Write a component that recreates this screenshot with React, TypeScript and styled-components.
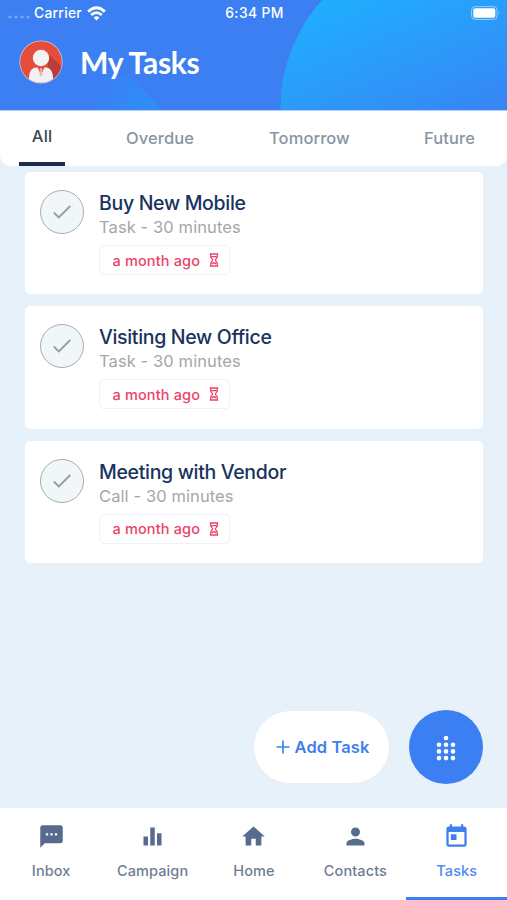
import React from 'react';
import styled, { createGlobalStyle } from 'styled-components';
import { MdTextsms, MdEqualizer, MdHome, MdPerson, MdToday } from 'react-icons/md';

const GlobalStyle = createGlobalStyle`
  * { box-sizing: border-box; }
  body { margin: 0; }
`;

const Screen = styled.div`
  width: 507px;
  height: 900px;
  display: flex;
  flex-direction: column;
  overflow: hidden;
  background: #e6f1fa;
  font-family: Inter, 'Liberation Sans', sans-serif;
`;

const Header = styled.header`
  position: relative;
  flex: none;
  height: 111px;
  background: #3c7ff2;
  border-bottom: 1px solid #b4d0fa;
  color: #fff;
`;

const Backdrop = styled.svg`
  position: absolute;
  inset: 0;
  display: block;
`;

const StatusBar = styled.div`
  position: relative;
  height: 26px;
  padding: 0 6px 0 8px;
  display: grid;
  grid-template-columns: 1fr auto 1fr;
  align-items: center;
  font-size: 13.8px;
  font-weight: 500;
  line-height: 26px;
`;

const Carrier = styled.div`
  display: flex;
  align-items: center;
  letter-spacing: 0.3px;
`;

const SignalDots = styled.svg`
  margin: 8px 4px 0 0;
`;

const Wifi = styled.svg`
  margin-left: 5px;
`;

const Clock = styled.div`
  letter-spacing: 0.4px;
`;

const Battery = styled.svg`
  justify-self: end;
`;

const TitleBar = styled.div`
  position: relative;
  display: flex;
  align-items: center;
  gap: 17px;
  padding: 13px 0 0 19px;
`;

const Title = styled.h1`
  margin: 0;
  padding-top: 1px;
  font-family: Lato, sans-serif;
  font-size: 30px;
  font-weight: 700;
  line-height: 44px;
  letter-spacing: -0.3px;
`;

const Tabs = styled.nav`
  flex: none;
  display: flex;
  height: 55px;
  padding-left: 19px;
  border-radius: 0 0 11px 11px;
  background: #fff;
`;

const Tab = styled.div<{ $active?: boolean; $width: number; $gap?: number }>`
  flex: none;
  width: ${(p) => p.$width}px;
  margin-left: ${(p) => p.$gap ?? 0}px;
  padding-top: ${(p) => (p.$active ? 15 : 17)}px;
  border-bottom: ${(p) => (p.$active ? '4px solid #1f2b4d' : 'none')};
  color: ${(p) => (p.$active ? '#3d4654' : '#8995a1')};
  font-size: 16.5px;
  font-weight: 500;
  line-height: 21px;
  letter-spacing: 0.1px;
  text-align: ${(p) => (p.$active ? 'center' : 'left')};
  white-space: nowrap;
`;

const TaskList = styled.main`
  flex: 1;
  display: flex;
  flex-direction: column;
  gap: 12px;
  padding: 6px 24px 0 25px;
`;

const Card = styled.article`
  flex: none;
  display: flex;
  gap: 15px;
  height: 122.4px;
  padding: 18px 15px;
  border-radius: 5px;
  background: #fff;
`;

const CheckCircle = styled.div`
  flex: none;
  width: 44px;
  height: 44px;
  display: flex;
  align-items: center;
  justify-content: center;
  border: 1.5px solid #a6adb3;
  border-radius: 50%;
  background: #f1f6f9;
`;

const TaskInfo = styled.div`
  padding-top: 1px;
`;

const TaskName = styled.div`
  color: #18335e;
  font-size: 19.5px;
  font-weight: 500;
  line-height: 24px;
  letter-spacing: -0.32px;
`;

const TaskMeta = styled.div`
  color: #a5a6a9;
  font-size: 16.5px;
  line-height: 24px;
  letter-spacing: 0.1px;
`;

const DueTag = styled.div`
  display: flex;
  align-items: center;
  gap: 9px;
  width: 131px;
  height: 30px;
  margin-top: 6px;
  padding-left: 12.5px;
  border: 1.5px solid #eef1f5;
  border-radius: 5px;
  color: #ed4268;
  font-size: 14.5px;
  font-weight: 500;
  letter-spacing: 0.15px;
  white-space: nowrap;
`;

const Actions = styled.div`
  flex: none;
  display: flex;
  align-items: center;
  justify-content: flex-end;
  gap: 19px;
  height: 74px;
  margin-bottom: 24px;
  padding-right: 24px;
`;

const AddButton = styled.button`
  display: flex;
  align-items: center;
  justify-content: center;
  gap: 5px;
  width: 137px;
  height: 74px;
  padding: 0 0 1px 2px;
  border: 1.5px solid #ebeef3;
  border-radius: 37px;
  background: #fff;
  color: #427fea;
  font-family: inherit;
  font-size: 16.5px;
  font-weight: 600;
  letter-spacing: 0.1px;
  white-space: nowrap;
`;

const DialButton = styled.button`
  width: 74px;
  height: 74px;
  padding: 1px 0 0;
  display: flex;
  align-items: center;
  justify-content: center;
  border: 0;
  border-radius: 50%;
  background: #3c7ff2;
`;

const BottomNav = styled.nav`
  flex: none;
  display: grid;
  grid-template-columns: repeat(5, 1fr);
  height: 92px;
  background: #fff;
`;

const NavItem = styled.div<{ $active?: boolean }>`
  display: flex;
  flex-direction: column;
  align-items: center;
  gap: 11px;
  padding: 15px 0 0 1px;
  border-bottom: 3px solid ${(p) => (p.$active ? '#3c7ff2' : 'transparent')};
  color: ${(p) => (p.$active ? '#3c7ff2' : '#566b8d')};
`;

const NavLabel = styled.span<{ $active?: boolean }>`
  color: ${(p) => (p.$active ? '#5089f3' : '#6f7d91')};
  font-size: 14.5px;
  font-weight: 500;
  line-height: 20px;
  letter-spacing: 0.1px;
`;

const Avatar = () => (
  <svg width="44" height="44" viewBox="0 0 44 44">
    <defs>
      <clipPath id="avatar-clip"><circle cx="22" cy="22" r="20.8" /></clipPath>
    </defs>
    <circle cx="22" cy="22" r="21.6" fill="#c7c6dc" />
    <g clipPath="url(#avatar-clip)">
      <rect width="44" height="44" fill="#e64c3c" />
      <path d="M27 12 44 28V44H32Z" fill="#b83d38" />
      <path d="M10 44V37Q10.500 28 17 27.500H27Q33.500 28 34 37V44Z" fill="#f1f1f1" />
      <path d="M18.500 27 22 35 25.500 27Z" fill="#e64c3c" />
      <path d="m22 27.500 1.500 2-.8 1.500.9 3.500-1.600 2-1.600-2 .9-3.500-.8-1.500Z" fill="#f3b0a8" />
      <circle cx="22" cy="18" r="8.200" fill="#f4f4f4" />
    </g>
  </svg>
);

const Hourglass = () => (
  <svg width="10" height="14" viewBox="0 0 10 14" fill="none" stroke="#ed4268" strokeWidth="1.300">
    <path d="M.8 1h8.400M.8 13h8.400M1.700 1v2.400C1.700 5.200 3.600 5.800 3.600 7S1.700 8.800 1.700 10.600V13M8.300 1v2.400C8.300 5.200 6.400 5.800 6.400 7S8.300 8.800 8.300 10.600V13M2.500 3.700h5M3 11q2-2.500 4 0" />
  </svg>
);

const tasks = [
  { name: 'Buy New Mobile', kind: 'Task' },
  { name: 'Visiting New Office', kind: 'Task' },
  { name: 'Meeting with Vendor', kind: 'Call' },
];

const navItems = [
  { label: 'Inbox', Icon: MdTextsms },
  { label: 'Campaign', Icon: MdEqualizer },
  { label: 'Home', Icon: MdHome },
  { label: 'Contacts', Icon: MdPerson },
  { label: 'Tasks', Icon: MdToday, active: true },
];

const dialDots = [[10, 3], [3, 9.7], [10, 9.7], [17, 9.7], [3, 16.4], [10, 16.4], [17, 16.4], [3, 23.1], [10, 23.1], [17, 23.1]];

export default function App() {
  return (
    <>
      <GlobalStyle />
      <Screen>
        <Header>
          <Backdrop width="507" height="110" viewBox="0 0 507 110">
            <defs>
              <linearGradient id="disc" gradientUnits="userSpaceOnUse" x1="320" y1="0" x2="400" y2="190">
                <stop offset="0" stopColor="#1fafff" />
                <stop offset="1" stopColor="#3c7df2" />
              </linearGradient>
              <linearGradient id="wedge" gradientUnits="userSpaceOnUse" x1="145" y1="106" x2="95" y2="90">
                <stop offset="0" stopColor="#2f8cf9" />
                <stop offset="1" stopColor="#3c7ff2" />
              </linearGradient>
            </defs>
            <path d="M80 110 104 78H130Q146 92 161 110Z" fill="url(#wedge)" />
            <circle cx="441.500" cy="108" r="161" fill="url(#disc)" />
          </Backdrop>
          <StatusBar>
            <Carrier>
              <SignalDots width="22" height="4" viewBox="0 0 22 4" fill="#78a6f7">
                <circle cx="2" cy="2" r="1.600" /><circle cx="8" cy="2" r="1.600" />
                <circle cx="14" cy="2" r="1.600" /><circle cx="20" cy="2" r="1.600" />
              </SignalDots>
              Carrier
              <Wifi width="19" height="15" viewBox="0 0 19 15" fill="none" stroke="#fff" strokeWidth="2.800">
                <path d="M1.200 5.600Q9.500-2 17.800 5.600M4.200 9Q9.500 4.200 14.800 9" />
                <path d="M6.600 11.400Q9.500 9 12.400 11.400L9.500 14.400Z" fill="#fff" stroke="none" />
              </Wifi>
            </Carrier>
            <Clock>6:34 PM</Clock>
            <Battery width="30" height="14" viewBox="0 0 30 14">
              <rect x=".6" y=".6" width="25.500" height="12.800" rx="3.500" fill="none" stroke="#9cccfc" strokeWidth="1" />
              <rect x="2.300" y="2.300" width="22" height="9.400" rx="2" fill="#fff" />
              <path d="M27.800 5q1.500 2 0 4Z" fill="#9cccfc" />
            </Battery>
          </StatusBar>
          <TitleBar>
            <Avatar />
            <Title>My Tasks</Title>
          </TitleBar>
        </Header>
        <Tabs>
          <Tab $active $width={46}>All</Tab>
          <Tab $width={70} $gap={61}>Overdue</Tab>
          <Tab $width={82} $gap={73}>Tomorrow</Tab>
          <Tab $width={54} $gap={73}>Future</Tab>
        </Tabs>
        <TaskList>
          {tasks.map((task) => (
            <Card key={task.name}>
              <CheckCircle>
                <svg width="20" height="16" viewBox="0 0 20 16" fill="none" stroke="#979da3" strokeWidth="1.900">
                  <path d="m1.800 8.500 5 5L18.300 2" />
                </svg>
              </CheckCircle>
              <TaskInfo>
                <TaskName>{task.name}</TaskName>
                <TaskMeta>{task.kind} - 30 minutes</TaskMeta>
                <DueTag>a month ago <Hourglass /></DueTag>
              </TaskInfo>
            </Card>
          ))}
        </TaskList>
        <Actions>
          <AddButton>
            <svg width="14" height="14" viewBox="0 0 14 14" stroke="#427fea" strokeWidth="1.700">
              <path d="M.5 7h13M7 .5v13" />
            </svg>
            Add Task
          </AddButton>
          <DialButton>
            <svg width="20" height="26" viewBox="0 0 20 26" fill="#fff">
              {dialDots.map(([x, y]) => <circle key={`${x}-${y}`} cx={x} cy={y} r="2.300" />)}
            </svg>
          </DialButton>
        </Actions>
        <BottomNav>
          {navItems.map(({ label, Icon, active }) => (
            <NavItem key={label} $active={active}>
              <Icon size={27} />
              <NavLabel $active={active}>{label}</NavLabel>
            </NavItem>
          ))}
        </BottomNav>
      </Screen>
    </>
  );
}
